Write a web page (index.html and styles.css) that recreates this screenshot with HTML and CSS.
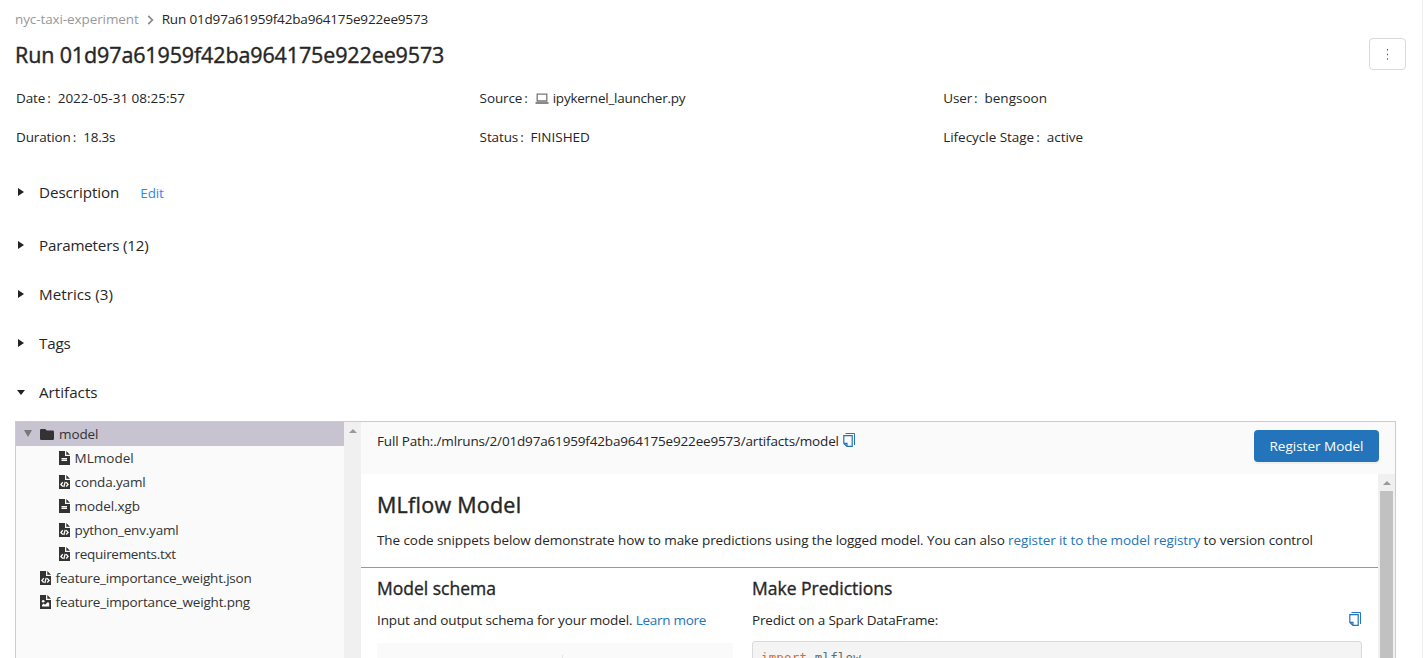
FILE: index.html
```
<!DOCTYPE html>
<html lang="en">
<head>
<meta charset="utf-8">
<title>Run 01d97a61959f42ba964175e922ee9573</title>
<link rel="stylesheet" href="styles.css">
</head>
<body>
<svg width="0" height="0" class="defs">
  <symbol id="file-text" viewBox="0 0 11 14"><path fill="#333" fill-rule="evenodd" d="M0 0H6V5H11V14H0ZM2.5 7V8H8V7ZM2.5 9V10H8V9Z"/><path fill="#aaa" d="M2.5 8H8V9H2.5Z"/><path fill="#333" d="M7.3 0L11 3.8H7.3Z"/></symbol>
  <symbol id="file-code" viewBox="0 0 11 14"><path fill="#333" d="M0 0H6V5H11V14H0Z"/><path fill="#333" d="M7.3 0L11 3.8H7.3Z"/><path fill="none" stroke="#fff" stroke-width="1.3" d="M3.8 7.3L1.9 9.4L3.8 11.5M7.2 7.3L9.1 9.4L7.2 11.5M6.2 6.8L4.8 12"/></symbol>
  <symbol id="file-image" viewBox="0 0 11 14"><path fill="#333" d="M0 0H6V5H11V14H0Z"/><path fill="#333" d="M7.3 0L11 3.8H7.3Z"/><circle cx="3.2" cy="6.2" r="1.3" fill="#fff"/><path fill="#fff" d="M2 11.5V10L3.7 8.5L5 9.7L8 7L9.2 8.2V11.5Z"/></symbol>
  <symbol id="copy" viewBox="0 0 12 14"><path fill="none" stroke="#2374bb" d="M2.5 .5H11.5V12"/><path fill="none" stroke="#2374bb" stroke-width="1.2" d="M.8 2.6H9.2V13.3H4L.8 10.4ZM.8 10.4H4V13.3"/></symbol>
</svg>
<div class="page">
  <nav class="crumbs"><a class="crumb-link">nyc-taxi-experiment</a><svg class="chevron" width="7" height="10" viewBox="0 0 7 10"><path d="M1.2 .8L5.4 5L1.2 9.2" fill="none" stroke="#888" stroke-width="1.7"/></svg><span class="crumb-run">Run 01d97a61959f42ba964175e922ee9573</span></nav>
  <header class="title-row"><h1>Run 01d97a61959f42ba964175e922ee9573</h1><button class="more"><svg width="3" height="11" viewBox="0 0 3 11"><path d="M1 0h1v1.5H1zM1 4.7h1v1.5H1zM1 9.2h1v1.5H1z" fill="#555"/></svg></button></header>
  <div class="meta">
    <div><span class="label">Date</span><span class="m-date">2022-05-31 08:25:57</span></div>
    <div><span class="label">Source</span><svg class="laptop" width="14" height="12" viewBox="0 0 14 12"><path d="M2.2 1.2H11.8V8H2.2Z" fill="none" stroke="#777" stroke-width="1.3"/><path d="M.5 9H13.5V11H.5Z" fill="#888"/></svg><span class="m-src">ipykernel_launcher.py</span></div>
    <div><span class="label">User</span><span class="m-user">bengsoon</span></div>
    <div><span class="label">Duration</span><span class="m-dur">18.3s</span></div>
    <div><span class="label">Status</span><span class="m-status">FINISHED</span></div>
    <div><span class="label stage">Lifecycle Stage</span><span class="m-active">active</span></div>
  </div>
  <section class="fold first"><i class="arrow"></i><span class="s-desc">Description</span><a class="edit">Edit</a></section>
  <section class="fold"><i class="arrow"></i><span class="s-param">Parameters (12)</span></section>
  <section class="fold"><i class="arrow"></i><span class="s-metric">Metrics (3)</span></section>
  <section class="fold"><i class="arrow"></i><span class="s-tags">Tags</span></section>
  <section class="fold"><i class="arrow open"></i><span class="s-art">Artifacts</span></section>
  <div class="artifacts">
    <div class="tree">
      <ul>
        <li class="selected"><i class="toggle"></i><svg class="folder" width="14" height="11" viewBox="0 0 14 11"><path fill="#333" d="M1.3 0H5.2L6.8 1.6H12.7Q14 1.6 14 2.9V9.7Q14 11 12.7 11H1.3Q0 11 0 9.7V1.3Q0 0 1.3 0Z"/></svg><span class="t-model">model</span></li>
        <li class="nested"><svg class="file"><use href="#file-text"/></svg><span class="t-ml">MLmodel</span></li>
        <li class="nested"><svg class="file"><use href="#file-code"/></svg><span class="t-conda">conda.yaml</span></li>
        <li class="nested"><svg class="file"><use href="#file-text"/></svg><span class="t-xgb">model.xgb</span></li>
        <li class="nested"><svg class="file"><use href="#file-code"/></svg><span class="t-env">python_env.yaml</span></li>
        <li class="nested"><svg class="file"><use href="#file-code"/></svg><span class="t-req">requirements.txt</span></li>
        <li class="leaf"><svg class="file"><use href="#file-code"/></svg><span class="t-json">feature_importance_weight.json</span></li>
        <li class="leaf"><svg class="file"><use href="#file-image"/></svg><span class="t-png">feature_importance_weight.png</span></li>
      </ul>
      <div class="scrollbar"><i class="up"></i></div>
    </div>
    <div class="viewer">
      <div class="viewer-head"><div class="path"><span class="p-text">Full Path:./mlruns/2/01d97a61959f42ba964175e922ee9573/artifacts/model</span><svg class="copy"><use href="#copy"/></svg></div><button class="register"><span>Register Model</span></button></div>
      <div class="viewer-body">
        <div class="content">
          <div class="intro"><h2>MLflow Model</h2><p><span class="i-a">The code snippets below demonstrate how to make predictions using the logged model. You can also </span><a class="i-b">register it to the model registry</a><span class="i-c"> to version control</span></p></div>
          <div class="columns">
            <div class="schema"><h3>Model schema</h3><p><span class="sc-a">Input and output schema for your model. </span><a class="sc-b">Learn more</a></p><div class="table-head"><i></i></div></div>
            <div class="predict"><h3>Make Predictions</h3><p><span class="pr-a">Predict on a Spark DataFrame:</span><svg class="copy"><use href="#copy"/></svg></p><pre><span class="kw">import</span> mlflow</pre></div>
          </div>
        </div>
        <div class="scrollbar"><i class="up"></i><b class="thumb"></b></div>
      </div>
    </div>
  </div>
</div>
</body>
</html>
```
FILE: styles.css
```
* { box-sizing: border-box; }
body { margin: 0; height: 658px; overflow: hidden; background: #fff; color: #262626; font: 13.5px/24px "Open Sans", "Noto Sans", sans-serif; }
h1, h2, h3, p, ul, pre { margin: 0; padding: 0; }
ul { list-style: none; }
button { font: inherit; padding: 0; display: flex; align-items: center; justify-content: center; }
span, a { white-space: pre; }
.defs { display: block; position: absolute; }
.page { height: 658px; overflow: hidden; padding: 7px 16px 0 15px; border-right: 1px solid #f0f0f0; }
.crumbs { display: flex; align-items: center; height: 24px; }
.crumb-link { color: #999; letter-spacing: -.1px; }
.crumb-run { letter-spacing: -.17px; }
.chevron { margin: 1px 8px 0; }
.title-row { display: flex; justify-content: space-between; align-items: center; height: 32px; margin-top: 7px; }
h1 { padding-top: 2px; font-size: 21.5px; line-height: 32px; font-weight: 400; letter-spacing: -.13px; white-space: pre; -webkit-text-stroke: .4px currentColor; }
.more { width: 37px; height: 32px; background: #fff; border: 1px solid #d9d9d9; border-radius: 4px; }
.meta { display: grid; grid-template-columns: repeat(3, 463.6px); grid-auto-rows: 24px; row-gap: 15px; margin-top: 16px; padding-left: 1px; }
.meta > div { display: flex; align-items: center; }
.label { letter-spacing: -.12px; }
.label::after { content: ":"; margin: 0 7px 0 2px; }
.stage { letter-spacing: -.03px; }
.m-src { letter-spacing: -.24px; }
.m-dur { letter-spacing: -.2px; }
.laptop { margin-right: 4px; margin-top: 2px; }
.fold { display: flex; align-items: center; height: 24px; margin-top: 25px; padding-left: 3px; font-size: 15.2px; }
.fold span { margin-top: -3px; }
.fold.first { margin: 32px 0 29px; }
.arrow { width: 6px; margin: -2px 15px 0 0; border: solid transparent; border-width: 4px 0 4px 6px; border-left-color: #222; }
.arrow.open { width: 8px; margin: -2px 14px 0 -1px; border-width: 5px 4px 0; border-color: #222 transparent transparent; }
.s-desc { letter-spacing: -.07px; }
.s-param { letter-spacing: -.2px; }
.s-metric { letter-spacing: .03px; }
.s-tags { letter-spacing: -.2px; }
.edit { margin-left: 21px; font-size: 13.5px; letter-spacing: -.15px; color: #2f86f6; }
.artifacts { display: flex; width: 1381px; height: 260px; margin-top: 16px; border: 1px solid #ccc; }
.tree { display: flex; width: 345px; background: #fafafa; }
.tree ul { flex: 1; }
.tree li { display: flex; align-items: center; height: 24px; color: #333; }
.tree .selected { background: #c7c3d0; }
.nested { padding-left: 43px; }
.leaf { padding-left: 24px; }
.toggle { border: solid transparent; border-width: 7px 4px 0; border-top-color: #777; margin: -1px 8px 0; }
.folder { margin-right: 5px; }
.file { width: 11px; height: 14px; margin-right: 4.6px; }
.t-model { letter-spacing: -.1px; }
.t-conda { letter-spacing: -.14px; }
.t-xgb { letter-spacing: -.08px; }
.t-env { letter-spacing: -.19px; }
.t-req { letter-spacing: -.3px; }
.t-json { letter-spacing: -.19px; }
.t-png { letter-spacing: -.17px; }
.scrollbar { display: flex; flex-direction: column; align-items: center; width: 17px; flex: none; background: #f0f0f0; }
.up { margin: 7px 0 6px; border: solid transparent; border-width: 0 4px 4px; border-bottom-color: #999; }
.thumb { width: 13px; flex: 1; background: #c1c1c1; }
.viewer { flex: 1; }
.viewer-head { display: flex; justify-content: space-between; height: 52px; padding: 8px 16px; background: #fafafa; }
.path { display: flex; height: 22px; align-items: center; }
.p-text { letter-spacing: -.165px; }
.copy { width: 12px; height: 14px; }
.path .copy { margin: -2px 0 0 4px; }
.register { width: 125px; height: 32px; border: 0; border-radius: 4px; background: #2374bb; color: #fff; box-shadow: 0 2px 0 #0000000b; }
.viewer-body { display: flex; height: 206px; }
.content { flex: 1; }
.intro { height: 94px; padding: 15px 16px 0; border-bottom: 1px solid #999; }
h2 { font-size: 21.5px; line-height: 32px; font-weight: 400; letter-spacing: .25px; -webkit-text-stroke: .4px currentColor; }
.intro p { margin-top: 7px; }
.i-a, .i-b, .i-c { letter-spacing: -.082px; }
.columns { display: flex; padding: 7px 16px 0; gap: 19px; }
h3 { font-size: 17.5px; line-height: 26px; font-weight: 400; -webkit-text-stroke: .35px currentColor; }
.schema { width: 356px; }
.predict { width: 610px; }
.columns p { display: flex; justify-content: space-between; align-items: center; margin-top: 7px; }
.schema p { justify-content: flex-start; }
.i-b, .sc-b { color: #2374bb; }
.sc-a { letter-spacing: -.12px; }
.sc-b { letter-spacing: -.3px; }
.pr-a { letter-spacing: -.17px; }
.predict .copy { margin-right: 1px; margin-top: -3px; }
.table-head { height: 60px; margin-top: 11px; padding: 12px 0 0 185px; background: #fafafa; }
.table-head i { display: block; width: 1px; height: 30px; background: #e4e4e4; }
pre { height: 60px; margin-top: 9px; padding: 5px 8px; border: 1px solid #d9d9d9; border-radius: 3px; background: #f4f4f4; color: #5c6e74; font: 12.5px/21px "DejaVu Sans Mono", monospace; letter-spacing: .16px; }
.kw { color: #d0703a; }
```
